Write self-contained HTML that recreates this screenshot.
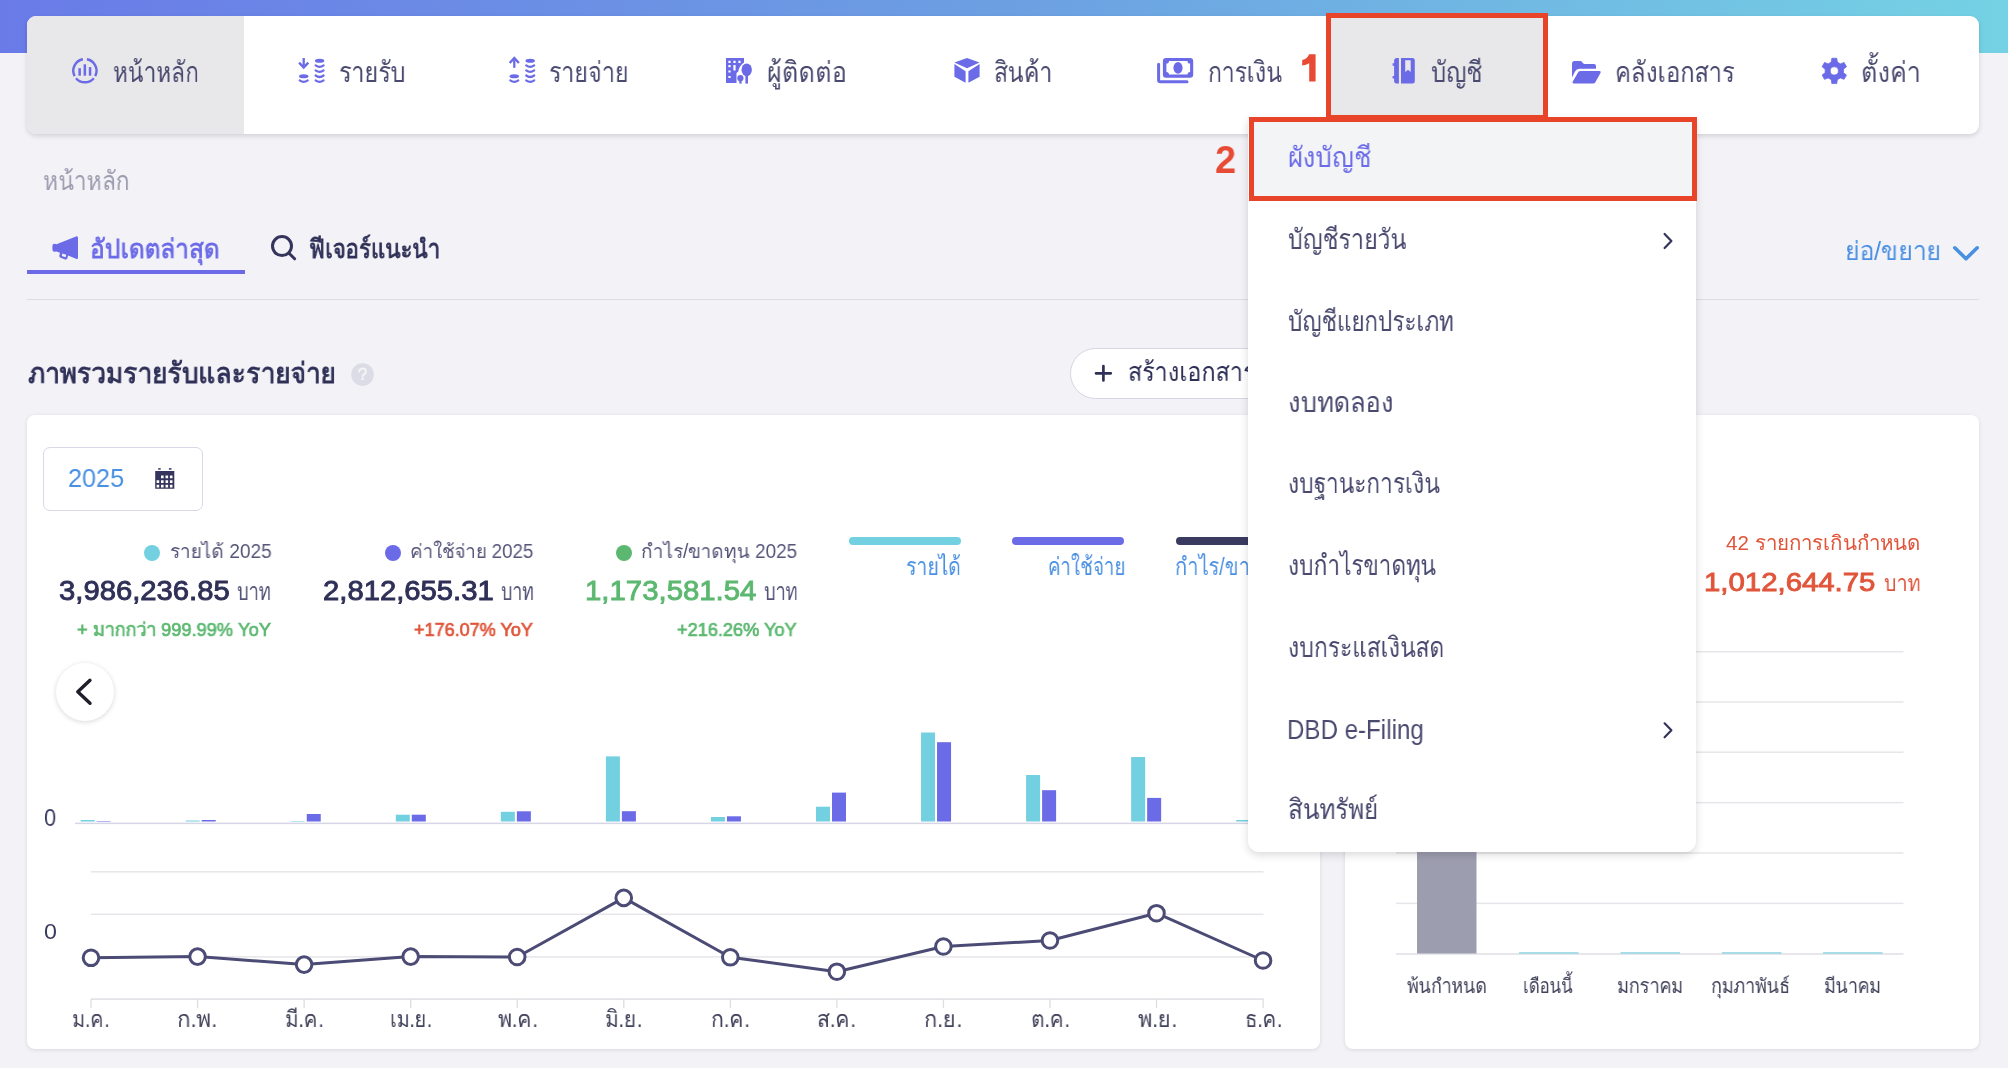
<!DOCTYPE html>
<html><head><meta charset="utf-8">
<style>
html,body{margin:0;padding:0;}
body{width:2008px;height:1068px;overflow:hidden;position:relative;background:#f3f2f7;font-family:"Liberation Sans",sans-serif;}
.a{position:absolute;}
.t{position:absolute;white-space:nowrap;line-height:1;transform-origin:0 0;will-change:transform;}
</style></head><body>
<div class="a" style="left:0;top:0;width:2008px;height:53px;background:linear-gradient(90deg,#6a7be8 0%,#6c9fe2 50%,#74d2e4 100%)"></div>
<!-- nav card -->
<div class="a" style="left:27px;top:16px;width:1952px;height:118px;background:#fff;border-radius:9px;box-shadow:0 2px 5px rgba(0,0,0,0.14)"></div>
<div class="a" style="left:27px;top:16px;width:217px;height:118px;background:#e8e7ea;border-radius:9px 0 0 9px"></div>
<div class="a" style="left:1326px;top:16px;width:222px;height:118px;background:#e8e7ea"></div>
<div class="a" style="left:1326px;top:13px;width:212px;height:97px;border:5px solid #e8442a;z-index:25"></div>
<!-- tabs -->
<div class="a" style="left:27px;top:270px;width:218px;height:4px;background:#6b6be8"></div>
<div class="a" style="left:27px;top:299px;width:1952px;height:1px;background:#dddce6"></div>
<!-- button -->
<div class="a" style="left:1070px;top:348px;width:260px;height:49px;border:1px solid #d6d6e4;border-radius:26px;background:#fff"></div>
<!-- cards -->
<div class="a" style="left:27px;top:415px;width:1293px;height:633.5px;background:#fff;border-radius:8px;box-shadow:0 1px 4px rgba(0,0,0,0.11)"></div>
<div class="a" style="left:1345px;top:415px;width:634px;height:633.5px;background:#fff;border-radius:8px;box-shadow:0 1px 4px rgba(0,0,0,0.11)"></div>
<!-- year input -->
<div class="a" style="left:43px;top:447px;width:158px;height:62px;border:1px solid #d8d8e6;border-radius:7px;background:#fff"></div>
<!-- dots -->
<div class="a" style="left:144px;top:545px;width:16px;height:16px;border-radius:50%;background:#72d0e0"></div>
<div class="a" style="left:385px;top:545px;width:16px;height:16px;border-radius:50%;background:#6b6be8"></div>
<div class="a" style="left:616px;top:545px;width:16px;height:16px;border-radius:50%;background:#5cb870"></div>
<!-- legend bars -->
<div class="a" style="left:849px;top:537px;width:112px;height:8px;border-radius:4px;background:#72d0e0"></div>
<div class="a" style="left:1012px;top:537px;width:112px;height:8px;border-radius:4px;background:#6b6be8"></div>
<div class="a" style="left:1176px;top:537px;width:112px;height:8px;border-radius:4px;background:#3a3a60"></div>
<svg class="a" style="left:0;top:0;z-index:2" width="1320" height="1068" viewBox="0 0 1320 1068"><rect x="75" y="822.6" width="1220" height="1.5" fill="#d6d6e6"/><rect x="80.65" y="820" width="14" height="1.50" fill="#72d0e0"/><rect x="96.65" y="821" width="14" height="0.50" fill="#6b6be8"/><rect x="185.70" y="820.5" width="14" height="1.00" fill="#72d0e0"/><rect x="201.70" y="820" width="14" height="1.50" fill="#6b6be8"/><rect x="290.75" y="821" width="14" height="0.50" fill="#72d0e0"/><rect x="306.75" y="814" width="14" height="7.50" fill="#6b6be8"/><rect x="395.80" y="814.7" width="14" height="6.80" fill="#72d0e0"/><rect x="411.80" y="814.7" width="14" height="6.80" fill="#6b6be8"/><rect x="500.85" y="811.8" width="14" height="9.70" fill="#72d0e0"/><rect x="516.85" y="811.3" width="14" height="10.20" fill="#6b6be8"/><rect x="605.90" y="756.4" width="14" height="65.10" fill="#72d0e0"/><rect x="621.90" y="811.2" width="14" height="10.30" fill="#6b6be8"/><rect x="710.95" y="817" width="14" height="4.50" fill="#72d0e0"/><rect x="726.95" y="816.3" width="14" height="5.20" fill="#6b6be8"/><rect x="816.00" y="806.7" width="14" height="14.80" fill="#72d0e0"/><rect x="832.00" y="792.6" width="14" height="28.90" fill="#6b6be8"/><rect x="921.05" y="732.5" width="14" height="89.00" fill="#72d0e0"/><rect x="937.05" y="742.2" width="14" height="79.30" fill="#6b6be8"/><rect x="1026.10" y="775" width="14" height="46.50" fill="#72d0e0"/><rect x="1042.10" y="790.2" width="14" height="31.30" fill="#6b6be8"/><rect x="1131.15" y="757" width="14" height="64.50" fill="#72d0e0"/><rect x="1147.15" y="797.9" width="14" height="23.60" fill="#6b6be8"/><rect x="1236.20" y="820" width="14" height="1.50" fill="#72d0e0"/><rect x="1252.20" y="821" width="14" height="0.50" fill="#6b6be8"/><rect x="91" y="871.05" width="1172.5" height="1.5" fill="#e6e6ea"/><rect x="91" y="913.55" width="1172.5" height="1.5" fill="#e6e6ea"/><rect x="91" y="956.15" width="1172.5" height="1.5" fill="#e6e6ea"/><rect x="91" y="998.3" width="1172.5" height="1.6" fill="#e2e2e6"/><rect x="90.40" y="999" width="1.3" height="9" fill="#dedee2"/><rect x="196.95" y="999" width="1.3" height="9" fill="#dedee2"/><rect x="303.50" y="999" width="1.3" height="9" fill="#dedee2"/><rect x="410.05" y="999" width="1.3" height="9" fill="#dedee2"/><rect x="516.60" y="999" width="1.3" height="9" fill="#dedee2"/><rect x="623.15" y="999" width="1.3" height="9" fill="#dedee2"/><rect x="729.70" y="999" width="1.3" height="9" fill="#dedee2"/><rect x="836.25" y="999" width="1.3" height="9" fill="#dedee2"/><rect x="942.80" y="999" width="1.3" height="9" fill="#dedee2"/><rect x="1049.35" y="999" width="1.3" height="9" fill="#dedee2"/><rect x="1155.90" y="999" width="1.3" height="9" fill="#dedee2"/><rect x="1262.45" y="999" width="1.3" height="9" fill="#dedee2"/><polyline points="91.00,957.8 197.55,956.6 304.10,964.6 410.65,956.6 517.20,957 623.75,897.9 730.30,957.3 836.85,971.7 943.40,946.5 1049.95,940.5 1156.50,913.2 1263.05,960.5" fill="none" stroke="#4b4b75" stroke-width="3" stroke-linejoin="round"/><circle cx="91.00" cy="957.8" r="7.8" fill="#fff" stroke="#4b4b75" stroke-width="3"/><circle cx="197.55" cy="956.6" r="7.8" fill="#fff" stroke="#4b4b75" stroke-width="3"/><circle cx="304.10" cy="964.6" r="7.8" fill="#fff" stroke="#4b4b75" stroke-width="3"/><circle cx="410.65" cy="956.6" r="7.8" fill="#fff" stroke="#4b4b75" stroke-width="3"/><circle cx="517.20" cy="957" r="7.8" fill="#fff" stroke="#4b4b75" stroke-width="3"/><circle cx="623.75" cy="897.9" r="7.8" fill="#fff" stroke="#4b4b75" stroke-width="3"/><circle cx="730.30" cy="957.3" r="7.8" fill="#fff" stroke="#4b4b75" stroke-width="3"/><circle cx="836.85" cy="971.7" r="7.8" fill="#fff" stroke="#4b4b75" stroke-width="3"/><circle cx="943.40" cy="946.5" r="7.8" fill="#fff" stroke="#4b4b75" stroke-width="3"/><circle cx="1049.95" cy="940.5" r="7.8" fill="#fff" stroke="#4b4b75" stroke-width="3"/><circle cx="1156.50" cy="913.2" r="7.8" fill="#fff" stroke="#4b4b75" stroke-width="3"/><circle cx="1263.05" cy="960.5" r="7.8" fill="#fff" stroke="#4b4b75" stroke-width="3"/></svg>
<svg class="a" style="left:1345px;top:415px;z-index:2" width="634" height="633" viewBox="1345 415 634 633"><rect x="1396" y="650.95" width="507.5" height="1.5" fill="#e6e6ea"/><rect x="1396" y="701.25" width="507.5" height="1.5" fill="#e6e6ea"/><rect x="1396" y="751.45" width="507.5" height="1.5" fill="#e6e6ea"/><rect x="1396" y="801.85" width="507.5" height="1.5" fill="#e6e6ea"/><rect x="1396" y="852.25" width="507.5" height="1.5" fill="#e6e6ea"/><rect x="1396" y="902.65" width="507.5" height="1.5" fill="#e6e6ea"/><rect x="1396" y="953.2" width="507.5" height="1.6" fill="#e2e2e6"/><rect x="1417" y="700" width="59.5" height="253.5" fill="#9d9db0"/><rect x="1519" y="952" width="59.5" height="2" fill="#a8dde8"/><rect x="1620.5" y="952" width="59.5" height="2" fill="#a8dde8"/><rect x="1722" y="952" width="59.5" height="2" fill="#a8dde8"/><rect x="1823" y="952" width="59.5" height="2" fill="#a8dde8"/></svg>
<svg class="a" style="left:66px;top:52px;z-index:3" width="38" height="38" viewBox="66 52 38 38"><path d="M86.91,59.28 A11.6,11.6 0 0 1 95.14,76.15" fill="none" stroke="#6b6be8" stroke-width="2.4"/><path d="M93.79,78.16 A11.6,11.6 0 0 1 76.01,78.16" fill="none" stroke="#6b6be8" stroke-width="2.4"/><path d="M74.66,76.15 A11.6,11.6 0 0 1 82.89,59.28" fill="none" stroke="#6b6be8" stroke-width="2.4"/><rect x="78.4" y="68.2" width="2.5" height="7.5" fill="#6b6be8"/><rect x="83.6" y="64.3" width="2.5" height="11.4" fill="#6b6be8"/><rect x="88.8" y="67.1" width="2.5" height="8.6" fill="#6b6be8"/></svg>
<svg class="a" style="left:292px;top:52px;z-index:3" width="40" height="38" viewBox="292 52 40 38"><path d="M303.7,58 V66" stroke="#6b6be8" stroke-width="2.3" fill="none"/><path d="M299.09999999999997,62.6 L303.7,67.6 L308.3,62.6" stroke="#6b6be8" stroke-width="2.4" fill="none"/><ellipse cx="303.7" cy="76.2" rx="4.7" ry="2" fill="#6b6be8"/><path d="M299.7,80.4 Q303.7,83.4 307.7,80.4" stroke="#6b6be8" stroke-width="2.2" fill="none" stroke-linecap="round"/><ellipse cx="319.6" cy="60.8" rx="4.7" ry="2" fill="#6b6be8"/><path d="M315.6,65.3 Q319.6,68.3 323.6,65.3" stroke="#6b6be8" stroke-width="2.2" fill="none" stroke-linecap="round"/><path d="M315.6,70.4 Q319.6,73.4 323.6,70.4" stroke="#6b6be8" stroke-width="2.2" fill="none" stroke-linecap="round"/><path d="M315.6,75.5 Q319.6,78.5 323.6,75.5" stroke="#6b6be8" stroke-width="2.2" fill="none" stroke-linecap="round"/><path d="M315.6,80.4 Q319.6,83.4 323.6,80.4" stroke="#6b6be8" stroke-width="2.2" fill="none" stroke-linecap="round"/></svg>
<svg class="a" style="left:502px;top:52px;z-index:3" width="40" height="38" viewBox="502 52 40 38"><path d="M514.3000000000001,67.8 V59.5" stroke="#6b6be8" stroke-width="2.3" fill="none"/><path d="M509.70000000000005,63 L514.3000000000001,58 L518.9000000000001,63" stroke="#6b6be8" stroke-width="2.4" fill="none" stroke-linejoin="miter"/><ellipse cx="514.3000000000001" cy="76.2" rx="4.7" ry="2" fill="#6b6be8"/><path d="M510.30000000000007,80.4 Q514.3000000000001,83.4 518.3000000000001,80.4" stroke="#6b6be8" stroke-width="2.2" fill="none" stroke-linecap="round"/><ellipse cx="530.2" cy="60.8" rx="4.7" ry="2" fill="#6b6be8"/><path d="M526.2,65.3 Q530.2,68.3 534.2,65.3" stroke="#6b6be8" stroke-width="2.2" fill="none" stroke-linecap="round"/><path d="M526.2,70.4 Q530.2,73.4 534.2,70.4" stroke="#6b6be8" stroke-width="2.2" fill="none" stroke-linecap="round"/><path d="M526.2,75.5 Q530.2,78.5 534.2,75.5" stroke="#6b6be8" stroke-width="2.2" fill="none" stroke-linecap="round"/><path d="M526.2,80.4 Q530.2,83.4 534.2,80.4" stroke="#6b6be8" stroke-width="2.2" fill="none" stroke-linecap="round"/></svg>
<svg class="a" style="left:720px;top:52px;z-index:3" width="40" height="38" viewBox="720 52 40 38"><path fill="#6b6be8" fill-rule="evenodd" d="M726,58 H744 V62.5 C741,64.5 738.5,68 738.3,71.5 L736.5,73 V83 H726 Z M728.4,60.8 h2.2 v2.2 h-2.2 Z M733.4,60.8 h2.2 v2.2 h-2.2 Z M738.4,60.8 h2.2 v2.2 h-2.2 Z M728.4,65.10000000000001 h2.2 v2.2 h-2.2 Z M728.4,70.4 h2.2 v2.2 h-2.2 Z M728.4,75.9 h2.2 v2.2 h-2.2 Z M733.4,65.1 h2.2 v5.5 h-2.2 Z"/><ellipse cx="746.7" cy="69.8" rx="5.2" ry="6.4" fill="#6b6be8"/><rect x="745.4" y="74" width="2.6" height="9.6" fill="#6b6be8"/><circle cx="740.4" cy="78.2" r="3.1" fill="#6b6be8"/><rect x="739.3" y="79" width="2.3" height="4.6" fill="#6b6be8"/></svg>
<svg class="a" style="left:948px;top:52px;z-index:3" width="38" height="38" viewBox="948 52 38 38"><path fill="#6b6be8" d="M967,58 L979.5,62.6 L967,68.3 L954.4,62.6 Z M954.4,64 L965.6,71.3 V82.7 L954.4,76.7 Z M979.6,64 L968.4,71.3 V82.7 L979.6,76.7 Z"/></svg>
<svg class="a" style="left:1152px;top:50px;z-index:3" width="48" height="40" viewBox="1152 50 48 40"><path fill="#6b6be8" fill-rule="evenodd" d="M1166,58 H1190 Q1193.2,58 1193.2,61 V74.7 Q1193.2,77.7 1190,77.7 H1166 Q1162.9,77.7 1162.9,74.7 V61 Q1162.9,58 1166,58 Z M1169,61 H1187.5 A2.6,2.6 0 0 0 1190.1,63.6 V71.9 A2.6,2.6 0 0 0 1187.5,74.5 H1169 A2.6,2.6 0 0 0 1166.4,71.9 V63.6 A2.6,2.6 0 0 0 1169,61 Z"/><ellipse cx="1178" cy="67.8" rx="4.6" ry="5.9" fill="#6b6be8"/><path d="M1158.6,64.3 V80 Q1158.6,81.8 1160.5,81.8 H1187" stroke="#6b6be8" stroke-width="3" fill="none" stroke-linecap="round"/></svg>
<svg class="a" style="left:1384px;top:52px;z-index:3" width="38" height="38" viewBox="1384 52 38 38"><path fill="#6b6be8" d="M1398.9,58 V83.5 H1396.5 Q1394.1,83.5 1394.1,81 V78.4 H1392.6 V76 H1394.1 V65.7 H1392.6 V63.3 H1394.1 V60.5 Q1394.1,58 1396.5,58 Z"/><path fill="#6b6be8" fill-rule="evenodd" d="M1401,58 H1412.3 Q1414.8,58 1414.8,60.5 V81 Q1414.8,83.5 1412.3,83.5 H1401 Z M1405.2,60.3 V72 L1408,69.8 L1410.7,72 V60.3 Z"/></svg>
<svg class="a" style="left:1566px;top:52px;z-index:3" width="40" height="38" viewBox="1566 52 40 38"><path fill="#6b6be8" d="M1572,63.5 Q1572,61.1 1574.5,61.1 H1581 L1584,64 H1594 Q1596,64 1596,66.3 V68.8 H1579.5 Q1576.5,68.8 1575,71.6 L1572,77.5 Z"/><path fill="#6b6be8" d="M1578.6,71.5 Q1579.5,70.9 1581,70.9 H1599.5 Q1601.3,71 1600.6,72.8 L1595.5,82 Q1594.8,83.5 1593,83.5 H1574 Q1571.8,83.4 1572.8,81.6 Z"/></svg>
<svg class="a" style="left:1816px;top:52px;z-index:3" width="38" height="38" viewBox="1816 52 38 38"><path fill="#6b6be8" fill-rule="evenodd" stroke="#6b6be8" stroke-width="0.8" stroke-linejoin="round" d="M1831.27,62.11 L1831.84,58.24 L1836.76,58.24 L1837.33,62.11 L1840.40,63.88 L1844.04,62.44 L1846.50,66.70 L1843.43,69.13 L1843.43,72.67 L1846.50,75.10 L1844.04,79.36 L1840.40,77.92 L1837.33,79.69 L1836.76,83.56 L1831.84,83.56 L1831.27,79.69 L1828.20,77.92 L1824.56,79.36 L1822.10,75.10 L1825.17,72.67 L1825.17,69.13 L1822.10,66.70 L1824.56,62.44 L1828.20,63.88 Z M1838.3999999999999,70.9 A4.1,4.1 0 1 0 1830.2,70.9 A4.1,4.1 0 1 0 1838.3999999999999,70.9 Z"/></svg>
<svg class="a" style="left:46px;top:228px;z-index:3" width="38" height="38" viewBox="46 228 38 38"><path fill="#6b6be8" d="M52.4,246 Q52.4,243.8 54.5,243.8 L56.5,244.3 L76,236.5 Q78,235.7 78,237.8 V257.5 Q78,259.7 76,258.8 L68,255.5 L67.5,258 Q67,260 65,259.5 L60.5,257.8 Q59,257.2 59.3,255.6 L60,252.8 L56.5,251.4 L54.5,251.8 Q52.4,251.8 52.4,249.6 Z"/><path fill="#f3f2f7" d="M62.5,253.5 L66.2,254.8 L65.5,257.2 L61.8,255.9 Z"/></svg>
<svg class="a" style="left:264px;top:228px;z-index:3" width="38" height="38" viewBox="264 228 38 38"><circle cx="282" cy="246.1" r="9.5" fill="none" stroke="#34345c" stroke-width="3"/><path d="M289,253.2 L294.6,258.8" stroke="#34345c" stroke-width="3" stroke-linecap="round"/></svg>
<svg class="a" style="left:346px;top:358px;z-index:3" width="32" height="32" viewBox="346 358 32 32"><circle cx="362.5" cy="374.6" r="11.3" fill="#dcdce6"/><path d="M359.1,371.5 Q359.5,368.6 362.6,368.6 Q365.9,368.7 365.9,371.6 Q365.9,373.3 364,374.4 Q362.6,375.2 362.6,376.3" stroke="#f3f3f6" stroke-width="2" fill="none" stroke-linecap="round"/><circle cx="362.6" cy="378.9" r="1.3" fill="#f3f3f6"/></svg>
<svg class="a" style="left:148px;top:460px;z-index:3" width="34" height="36" viewBox="148 460 34 36"><path fill="#34345c" fill-rule="evenodd" d="M155.2,471 H174.3 V488.8 H155.2 Z M161.0,475.59999999999997 h2.6 v2.6 h-2.6 Z M165.5,475.59999999999997 h2.6 v2.6 h-2.6 Z M169.89999999999998,475.59999999999997 h2.6 v2.6 h-2.6 Z M156.6,480.3 h2.6 v2.6 h-2.6 Z M161.0,480.3 h2.6 v2.6 h-2.6 Z M165.5,480.3 h2.6 v2.6 h-2.6 Z M169.89999999999998,480.3 h2.6 v2.6 h-2.6 Z M156.6,484.8 h2.6 v2.6 h-2.6 Z M161.0,484.8 h2.6 v2.6 h-2.6 Z M165.5,484.8 h2.6 v2.6 h-2.6 Z M169.89999999999998,484.8 h2.6 v2.6 h-2.6 Z"/><rect x="158.1" y="468" width="2.6" height="1.8" fill="#5a5a78"/><rect x="168.9" y="468" width="2.6" height="1.8" fill="#5a5a78"/></svg>
<svg class="a" style="left:1090px;top:358px;z-index:3" width="30" height="30" viewBox="1090 358 30 30"><path d="M1103.4,366 V380.5 M1096,373.3 H1110.8" stroke="#2f3057" stroke-width="2.7" stroke-linecap="round"/></svg>
<svg class="a" style="left:1948px;top:240px;z-index:3" width="36" height="26" viewBox="1948 240 36 26"><path d="M1954.8,247.8 L1966,258.7 L1977.2,247.8" stroke="#4a90e2" stroke-width="3.6" fill="none" stroke-linecap="round" stroke-linejoin="round"/></svg>
<svg class="a" style="left:1298px;top:50px;z-index:30" width="22" height="35" viewBox="1298 50 22 35"><path fill="#e84b35" d="M1309,54.3 H1315.6 V81.4 H1309.2 V63.2 Q1306.2,65 1302.2,65.4 V60 Q1307.6,58.8 1309,54.3 Z"/></svg>
<div class="a" style="left:55.5px;top:663px;width:58px;height:58px;border-radius:50%;background:#fff;box-shadow:0 1px 5px rgba(0,0,0,0.16);z-index:4"></div>
<svg class="a" style="left:70px;top:672px;z-index:5" width="30" height="40" viewBox="70 672 30 40"><path d="M90,680.3 L77.8,691.8 L90,703.3" stroke="#1f1f2b" stroke-width="3.4" fill="none" stroke-linecap="round" stroke-linejoin="round"/></svg>
<svg class="a" style="left:1656px;top:227px;z-index:22" width="24" height="28" viewBox="1656 227 24 28"><path d="M1664.6,234 L1671.4,241 L1664.6,248" stroke="#34345c" stroke-width="2.2" fill="none" stroke-linecap="round" stroke-linejoin="round"/></svg>
<svg class="a" style="left:1656px;top:716px;z-index:22" width="24" height="28" viewBox="1656 716 24 28"><path d="M1664.6,723.3 L1671.4,730.3 L1664.6,737.3" stroke="#34345c" stroke-width="2.2" fill="none" stroke-linecap="round" stroke-linejoin="round"/></svg>
<!-- dropdown -->
<div class="a" style="left:1248px;top:118px;width:448px;height:734px;background:#fff;border-radius:0 0 11px 11px;box-shadow:0 3px 8px rgba(0,0,0,0.15);z-index:20"></div>
<div class="a" style="left:1249px;top:117px;width:438px;height:74px;background:#f3f4f6;border:5px solid #e8442a;z-index:21"></div>
<span class='t' style='left:112.51px;top:57.99px;font-size:28.6px;font-weight:400;color:#4a4a70;transform:scaleX(0.7860);z-index:1'>หน้าหลัก</span>
<span class='t' style='left:338.98px;top:57.99px;font-size:28.6px;font-weight:400;color:#4a4a70;transform:scaleX(0.8190);z-index:1'>รายรับ</span>
<span class='t' style='left:549.39px;top:57.99px;font-size:28.6px;font-weight:400;color:#4a4a70;transform:scaleX(0.8137);z-index:1'>รายจ่าย</span>
<span class='t' style='left:767.02px;top:57.99px;font-size:28.6px;font-weight:400;color:#4a4a70;transform:scaleX(0.8761);z-index:1'>ผู้ติดต่อ</span>
<span class='t' style='left:993.89px;top:57.99px;font-size:28.6px;font-weight:400;color:#4a4a70;transform:scaleX(0.8087);z-index:1'>สินค้า</span>
<span class='t' style='left:1208.09px;top:57.99px;font-size:28.6px;font-weight:400;color:#4a4a70;transform:scaleX(0.8078);z-index:1'>การเงิน</span>
<span class='t' style='left:1430.96px;top:57.99px;font-size:28.6px;font-weight:400;color:#4a4a70;transform:scaleX(0.8383);z-index:1'>บัญชี</span>
<span class='t' style='left:1615.03px;top:57.99px;font-size:28.6px;font-weight:400;color:#4a4a70;transform:scaleX(0.8355);z-index:1'>คลังเอกสาร</span>
<span class='t' style='left:1860.64px;top:57.99px;font-size:28.6px;font-weight:400;color:#4a4a70;transform:scaleX(0.8797);z-index:1'>ตั้งค่า</span>
<span class='t' style='left:42.64px;top:168.42px;font-size:26.67px;font-weight:400;color:#9e9db0;transform:scaleX(0.8556);z-index:1'>หน้าหลัก</span>
<span class='t' style='left:90.37px;top:236.42px;font-size:26.32px;font-weight:400;color:#6b6be8;transform:scaleX(0.9254);z-index:1;-webkit-text-stroke:0.8px'>อัปเดตล่าสุด</span>
<span class='t' style='left:308.95px;top:236.42px;font-size:26.32px;font-weight:400;color:#2f3057;transform:scaleX(0.8474);z-index:1;-webkit-text-stroke:0.8px'>ฟีเจอร์แนะนำ</span>
<span class='t' style='left:27.60px;top:358.89px;font-size:28.95px;font-weight:400;color:#2f3057;transform:scaleX(0.9056);z-index:1;-webkit-text-stroke:0.9px'>ภาพรวมรายรับและรายจ่าย</span>
<span class='t' style='left:1127.51px;top:358.72px;font-size:26.32px;font-weight:400;color:#2f3057;transform:scaleX(0.8853);z-index:1'>สร้างเอกสาร</span>
<span class='t' style='left:1844.86px;top:238.82px;font-size:25.61px;font-weight:400;color:#4a90e2;transform:scaleX(0.9694);z-index:1'>ย่อ/ขยาย</span>
<span class='t' style='left:67.82px;top:465.64px;font-size:25.71px;font-weight:400;color:#4a90e2;transform:scaleX(0.9806);z-index:1'>2025</span>
<span class='t' style='left:169.50px;top:542.17px;font-size:19.29px;font-weight:400;color:#55557a;transform:scaleX(0.9851);z-index:1'>รายได้ 2025</span>
<span class='t' style='left:410.33px;top:542.17px;font-size:19.29px;font-weight:400;color:#55557a;transform:scaleX(0.9695);z-index:1'>ค่าใช้จ่าย 2025</span>
<span class='t' style='left:641.32px;top:542.17px;font-size:19.29px;font-weight:400;color:#55557a;transform:scaleX(0.9773);z-index:1'>กำไร/ขาดทุน 2025</span>
<span class='t' style='left:58.95px;top:576.72px;font-size:27.86px;font-weight:400;color:#2f3057;transform:scaleX(1.0498);z-index:1;-webkit-text-stroke:0.9px'>3,986,236.85</span>
<span class='t' style='left:322.75px;top:576.72px;font-size:27.86px;font-weight:400;color:#2f3057;transform:scaleX(1.0492);z-index:1;-webkit-text-stroke:0.9px'>2,812,655.31</span>
<span class='t' style='left:585.29px;top:576.72px;font-size:27.86px;font-weight:400;color:#5cb870;transform:scaleX(1.0539);z-index:1;-webkit-text-stroke:0.9px'>1,173,581.54</span>
<span class='t' style='left:237.20px;top:580.10px;font-size:23.86px;font-weight:400;color:#55557a;transform:scaleX(0.7744);z-index:1'>บาท</span>
<span class='t' style='left:500.70px;top:580.10px;font-size:23.86px;font-weight:400;color:#55557a;transform:scaleX(0.7512);z-index:1'>บาท</span>
<span class='t' style='left:763.50px;top:580.10px;font-size:23.86px;font-weight:400;color:#55557a;transform:scaleX(0.7698);z-index:1'>บาท</span>
<span class='t' style='left:76.90px;top:621.40px;font-size:18.43px;font-weight:400;color:#5cb870;transform:scaleX(0.9894);z-index:1;-webkit-text-stroke:0.7px'>+ มากกว่า 999.99% YoY</span>
<span class='t' style='left:414.00px;top:621.40px;font-size:18.43px;font-weight:400;color:#e0553a;transform:scaleX(0.9799);z-index:1;-webkit-text-stroke:0.7px'>+176.07% YoY</span>
<span class='t' style='left:676.80px;top:621.40px;font-size:18.43px;font-weight:400;color:#5cb870;transform:scaleX(0.9865);z-index:1;-webkit-text-stroke:0.7px'>+216.26% YoY</span>
<span class='t' style='left:906.21px;top:555.21px;font-size:24.56px;font-weight:400;color:#4a90e2;transform:scaleX(0.7941);z-index:1'>รายได้</span>
<span class='t' style='left:1047.64px;top:555.21px;font-size:24.56px;font-weight:400;color:#4a90e2;transform:scaleX(0.7636);z-index:1'>ค่าใช้จ่าย</span>
<span class='t' style='left:1174.98px;top:555.21px;font-size:24.56px;font-weight:400;color:#4a90e2;transform:scaleX(0.8168);z-index:1'>กำไร/ขาดทุน</span>
<span class='t' style='left:1725.90px;top:532.82px;font-size:20.29px;font-weight:400;color:#e0553a;transform:scaleX(1.0121);z-index:1'>42 รายการเกินกำหนด</span>
<span class='t' style='left:1704.07px;top:569.15px;font-size:26.29px;font-weight:400;color:#e0553a;transform:scaleX(1.1171);z-index:1;-webkit-text-stroke:0.9px'>1,012,644.75</span>
<span class='t' style='left:1884.00px;top:571.80px;font-size:23.16px;font-weight:400;color:#e0553a;transform:scaleX(0.8429);z-index:1'>บาท</span>
<span class='t' style='left:44.00px;top:806.69px;font-size:23.29px;font-weight:400;color:#3a3a60;transform:scaleX(0.9385);z-index:1'>0</span>
<span class='t' style='left:44.00px;top:920.45px;font-size:22.86px;font-weight:400;color:#3a3a60;transform:scaleX(1.0167);z-index:1'>0</span>
<span class='t' style='left:72.44px;top:1008.25px;font-size:23.33px;font-weight:400;color:#43435c;transform:scaleX(0.8606);z-index:1'>ม.ค.</span>
<span class='t' style='left:177.44px;top:1008.25px;font-size:23.33px;font-weight:400;color:#43435c;transform:scaleX(0.9625);z-index:1'>ก.พ.</span>
<span class='t' style='left:284.91px;top:1008.25px;font-size:23.33px;font-weight:400;color:#43435c;transform:scaleX(0.8871);z-index:1'>มี.ค.</span>
<span class='t' style='left:389.96px;top:1008.25px;font-size:23.33px;font-weight:400;color:#43435c;transform:scaleX(0.8445);z-index:1'>เม.ย.</span>
<span class='t' style='left:498.20px;top:1008.25px;font-size:23.33px;font-weight:400;color:#43435c;transform:scaleX(0.9133);z-index:1'>พ.ค.</span>
<span class='t' style='left:605.11px;top:1008.25px;font-size:23.33px;font-weight:400;color:#43435c;transform:scaleX(0.8941);z-index:1'>มิ.ย.</span>
<span class='t' style='left:711.29px;top:1008.25px;font-size:23.33px;font-weight:400;color:#43435c;transform:scaleX(0.9091);z-index:1'>ก.ค.</span>
<span class='t' style='left:817.39px;top:1008.25px;font-size:23.33px;font-weight:400;color:#43435c;transform:scaleX(0.9115);z-index:1'>ส.ค.</span>
<span class='t' style='left:924.36px;top:1008.25px;font-size:23.33px;font-weight:400;color:#43435c;transform:scaleX(0.9381);z-index:1'>ก.ย.</span>
<span class='t' style='left:1031.01px;top:1008.25px;font-size:23.33px;font-weight:400;color:#43435c;transform:scaleX(0.8896);z-index:1'>ต.ค.</span>
<span class='t' style='left:1137.70px;top:1008.25px;font-size:23.33px;font-weight:400;color:#43435c;transform:scaleX(0.9387);z-index:1'>พ.ย.</span>
<span class='t' style='left:1244.93px;top:1008.25px;font-size:23.33px;font-weight:400;color:#43435c;transform:scaleX(0.8720);z-index:1'>ธ.ค.</span>
<span class='t' style='left:1407.00px;top:975.82px;font-size:20.18px;font-weight:400;color:#43435c;transform:scaleX(0.8876);z-index:1'>พ้นกำหนด</span>
<span class='t' style='left:1523.17px;top:975.82px;font-size:20.18px;font-weight:400;color:#43435c;transform:scaleX(0.8305);z-index:1'>เดือนนี้</span>
<span class='t' style='left:1616.70px;top:975.82px;font-size:20.18px;font-weight:400;color:#43435c;transform:scaleX(0.9028);z-index:1'>มกราคม</span>
<span class='t' style='left:1711.10px;top:975.82px;font-size:20.18px;font-weight:400;color:#43435c;transform:scaleX(0.8966);z-index:1'>กุมภาพันธ์</span>
<span class='t' style='left:1823.81px;top:975.82px;font-size:20.18px;font-weight:400;color:#43435c;transform:scaleX(0.8855);z-index:1'>มีนาคม</span>
<span class='t' style='left:1288.08px;top:144.24px;font-size:28.07px;font-weight:400;color:#6b6be8;transform:scaleX(0.9169);z-index:22'>ผังบัญชี</span>
<span class='t' style='left:1288.17px;top:225.54px;font-size:28.07px;font-weight:400;color:#4a4a70;transform:scaleX(0.8275);z-index:22'>บัญชีรายวัน</span>
<span class='t' style='left:1288.20px;top:307.74px;font-size:28.07px;font-weight:400;color:#4a4a70;transform:scaleX(0.8029);z-index:22'>บัญชีแยกประเภท</span>
<span class='t' style='left:1288.09px;top:388.64px;font-size:28.07px;font-weight:400;color:#4a4a70;transform:scaleX(0.9115);z-index:22'>งบทดลอง</span>
<span class='t' style='left:1288.19px;top:470.04px;font-size:28.07px;font-weight:400;color:#4a4a70;transform:scaleX(0.8070);z-index:22'>งบฐานะการเงิน</span>
<span class='t' style='left:1288.20px;top:552.24px;font-size:28.07px;font-weight:400;color:#4a4a70;transform:scaleX(0.8022);z-index:22'>งบกำไรขาดทุน</span>
<span class='t' style='left:1288.19px;top:634.04px;font-size:28.07px;font-weight:400;color:#4a4a70;transform:scaleX(0.8126);z-index:22'>งบกระแสเงินสด</span>
<span class='t' style='left:1288.13px;top:796.24px;font-size:28.07px;font-weight:400;color:#4a4a70;transform:scaleX(0.8725);z-index:22'>สินทรัพย์</span>
<span class='t' style='left:1287.22px;top:715.56px;font-size:27.1px;font-weight:400;color:#4a4a70;transform:scaleX(0.8904);z-index:22'>DBD e-Filing</span>
<span class='t' style='left:1215.03px;top:140.18px;font-size:39.13px;font-weight:700;color:#e84b35;transform:scaleX(0.9700);z-index:30'>2</span>
</body></html>
